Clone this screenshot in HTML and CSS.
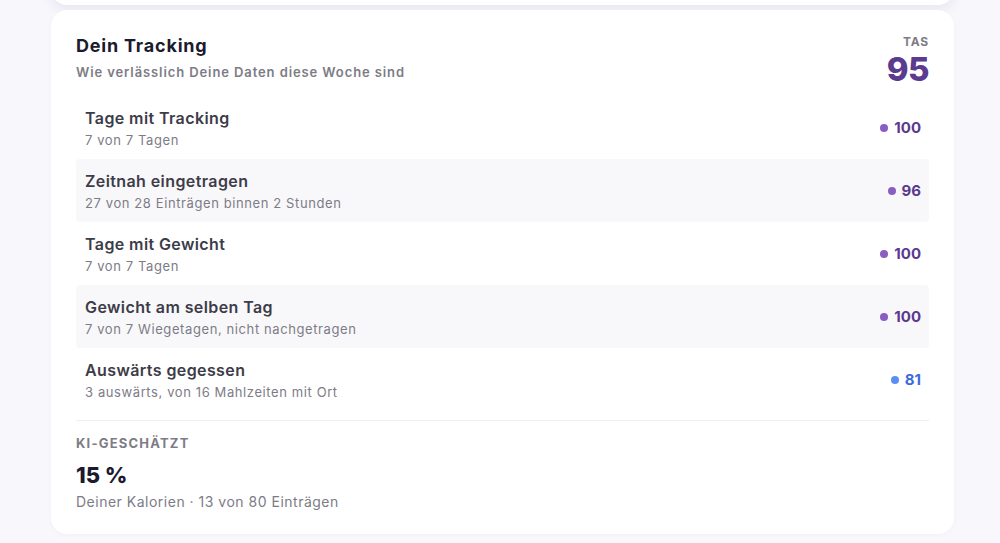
FILE: index.html
```html
<!DOCTYPE html>
<html lang="de">
<head>
    <meta charset="UTF-8">
    <meta name="viewport" content="width=device-width, initial-scale=1.0">
    <title>Dein Tracking</title>
    <link rel="stylesheet" href="styles.css">
</head>
<body>
    <div class="page">
        <div class="card-prev"></div>

        <section class="card">
            <header class="card-head">
                <div>
                    <h2>Dein Tracking</h2>
                    <p class="sub">Wie verlässlich Deine Daten diese Woche sind</p>
                </div>
                <div class="score">
                    <span class="score-label">TAS</span>
                    <span class="score-value">95</span>
                </div>
            </header>

            <ul class="rows">
                <li class="row">
                    <div>
                        <div class="row-title">Tage mit Tracking</div>
                        <div class="row-sub">7 von 7 Tagen</div>
                    </div>
                    <div class="row-val"><span class="dot"></span>100</div>
                </li>
                <li class="row shade">
                    <div>
                        <div class="row-title">Zeitnah eingetragen</div>
                        <div class="row-sub">27 von 28 Einträgen binnen 2 Stunden</div>
                    </div>
                    <div class="row-val"><span class="dot"></span>96</div>
                </li>
                <li class="row">
                    <div>
                        <div class="row-title">Tage mit Gewicht</div>
                        <div class="row-sub">7 von 7 Tagen</div>
                    </div>
                    <div class="row-val"><span class="dot"></span>100</div>
                </li>
                <li class="row shade">
                    <div>
                        <div class="row-title">Gewicht am selben Tag</div>
                        <div class="row-sub">7 von 7 Wiegetagen, nicht nachgetragen</div>
                    </div>
                    <div class="row-val"><span class="dot"></span>100</div>
                </li>
                <li class="row">
                    <div>
                        <div class="row-title">Auswärts gegessen</div>
                        <div class="row-sub">3 auswärts, von 16 Mahlzeiten mit Ort</div>
                    </div>
                    <div class="row-val blue"><span class="dot"></span>81</div>
                </li>
            </ul>

            <div class="ki">
                <div class="ki-label">KI-GESCHÄTZT</div>
                <div class="ki-value">15 %</div>
                <div class="ki-sub">Deiner Kalorien · 13 von 80 Einträgen</div>
            </div>
        </section>
    </div>
</body>
</html>
```

FILE: styles.css
```css
:root {
    --bg: #f8f7fc;
    --ink: #1b1a2e;
    --text: #3d3c48;
    --muted: #7d7c86;
    --purple: #5b3a8f;
    --dot: #8b5cc2;
    --blue: #3b6cd8;
    --blue-dot: #5a8ef0;
    --shade: #f8f8fa;
}

* {
    margin: 0;
    padding: 0;
    box-sizing: border-box;
}

body {
    font-family: Inter, 'Noto Sans', sans-serif;
    background: var(--bg);
    height: 543px;
    overflow: hidden;
}

.page {
    width: 903px;
    margin-left: 51px;
    display: flex;
    flex-direction: column;
    gap: 5px;
    margin-top: -20px;
}

/* bottom edge of the card above */
.card-prev {
    height: 25px;
    background: #fff;
    border-radius: 0 0 16px 16px;
    box-shadow: 0 4px 12px rgba(90, 70, 140, 0.1);
}

.card {
    background: #fff;
    border-radius: 16px;
    padding: 24px 25px 23px;
    box-shadow: 0 1px 4px rgba(90, 70, 140, 0.04);
}

.card-head {
    display: flex;
    justify-content: space-between;
    align-items: flex-start;
    margin-bottom: 7px;
}

.card-head h2 {
    font-size: 18px;
    font-weight: 700;
    color: var(--ink);
    letter-spacing: 0.8px;
    line-height: 24px;
}

.sub {
    font-size: 13px;
    font-weight: 600;
    color: var(--muted);
    margin-top: 5px;
    line-height: 18px;
    letter-spacing: 0.9px;
}

.score {
    display: flex;
    flex-direction: column;
    align-items: flex-end;
    margin-top: 1px;
}

.score-label {
    font-size: 12px;
    font-weight: 700;
    color: var(--muted);
    letter-spacing: 0.8px;
    line-height: 14px;
}

.score-value {
    font-size: 33px;
    font-weight: 800;
    color: var(--purple);
    line-height: 40px;
    letter-spacing: -0.5px;
}

.rows {
    list-style: none;
}

.row {
    height: 63px;
    display: flex;
    justify-content: space-between;
    align-items: center;
    padding: 0 8px 0 9px;
    border-radius: 4px;
}

.row.shade {
    background: var(--shade);
}

.row-title {
    font-size: 16px;
    font-weight: 600;
    color: var(--text);
    line-height: 20px;
    letter-spacing: 0.4px;
}

.row-sub {
    font-size: 13px;
    color: var(--muted);
    margin-top: 4px;
    line-height: 16px;
    letter-spacing: 0.6px;
}

.row-val {
    display: flex;
    align-items: center;
    gap: 6px;
    font-size: 15px;
    font-weight: 700;
    color: var(--purple);
}

.dot {
    width: 8px;
    height: 8px;
    border-radius: 50%;
    background: var(--dot);
}

.row-val.blue {
    color: var(--blue);
}

.row-val.blue .dot {
    background: var(--blue-dot);
}

.ki {
    border-top: 1px solid #eeedf1;
    margin-top: 9px;
    padding-top: 14px;
}

.ki-label {
    font-size: 13px;
    font-weight: 700;
    color: var(--muted);
    letter-spacing: 1.2px;
    line-height: 16px;
}

.ki-value {
    font-size: 22px;
    font-weight: 800;
    color: var(--ink);
    margin-top: 9px;
    line-height: 30px;
}

.ki-sub {
    font-size: 14px;
    color: var(--muted);
    margin-top: 3px;
    line-height: 18px;
    letter-spacing: 0.5px;
}
```
